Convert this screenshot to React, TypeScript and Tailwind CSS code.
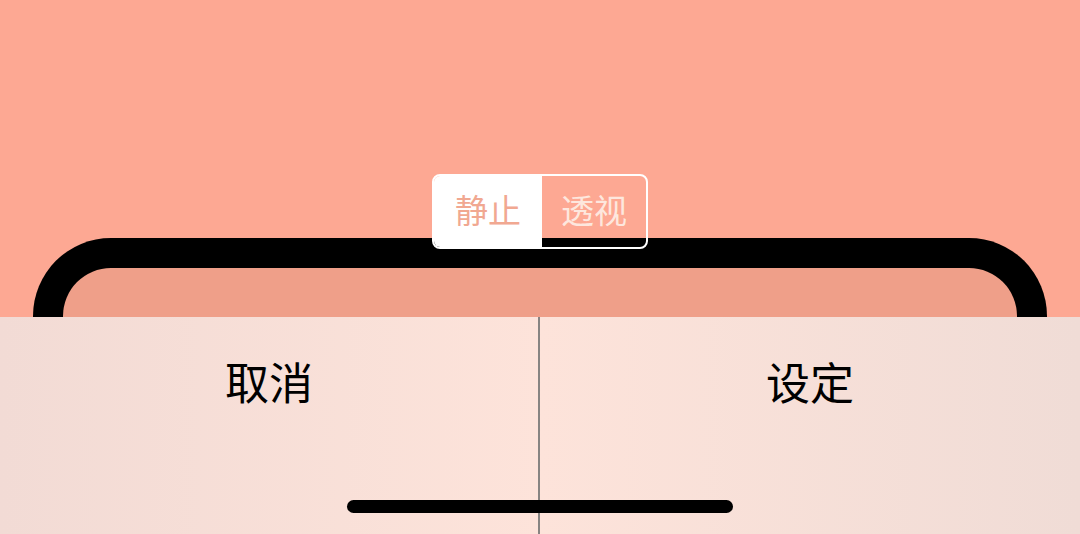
const cjk = { fontFamily: '"Noto Sans CJK SC", "Noto Sans", sans-serif' };

export default function App() {
  return (
    <div className="relative h-[534px] w-[1080px] overflow-hidden bg-[#fda893]" style={cjk}>
      {/* phone frame edge */}
      <div className="mx-[33px] mt-[238px] h-[79px] rounded-t-[78px] border-[30px] border-b-0 border-black bg-[#ef9f89]" />

      {/* action sheet */}
      <div className="grid h-[217px] grid-cols-2 bg-gradient-to-r from-[#f2dbd5] via-[#fde3da] to-[#f0dcd6]">
        <div className="flex justify-center border-r-2 border-[#878482] pt-[36px]">
          <span className="text-[44px] leading-[56px] text-black">取消</span>
        </div>
        <div className="flex justify-center pt-[36px]">
          <span className="text-[44px] leading-[56px] text-black">设定</span>
        </div>
      </div>

      {/* segmented control */}
      <div className="absolute left-[432px] top-[174px] flex h-[75px] w-[216px] overflow-hidden rounded-[8px] border-2 border-white">
        <div className="flex w-[108px] items-center justify-center bg-white pb-[5px]">
          <span className="text-[33px] leading-none text-[#f1a891]">静止</span>
        </div>
        <div className="flex flex-1 items-center justify-center pb-[5px]">
          <span className="text-[33px] leading-none text-[#fde7de]">透视</span>
        </div>
      </div>

      {/* home indicator */}
      <div className="absolute bottom-[21px] left-[347px] h-[13px] w-[386px] rounded-full bg-black" />
    </div>
  );
}
